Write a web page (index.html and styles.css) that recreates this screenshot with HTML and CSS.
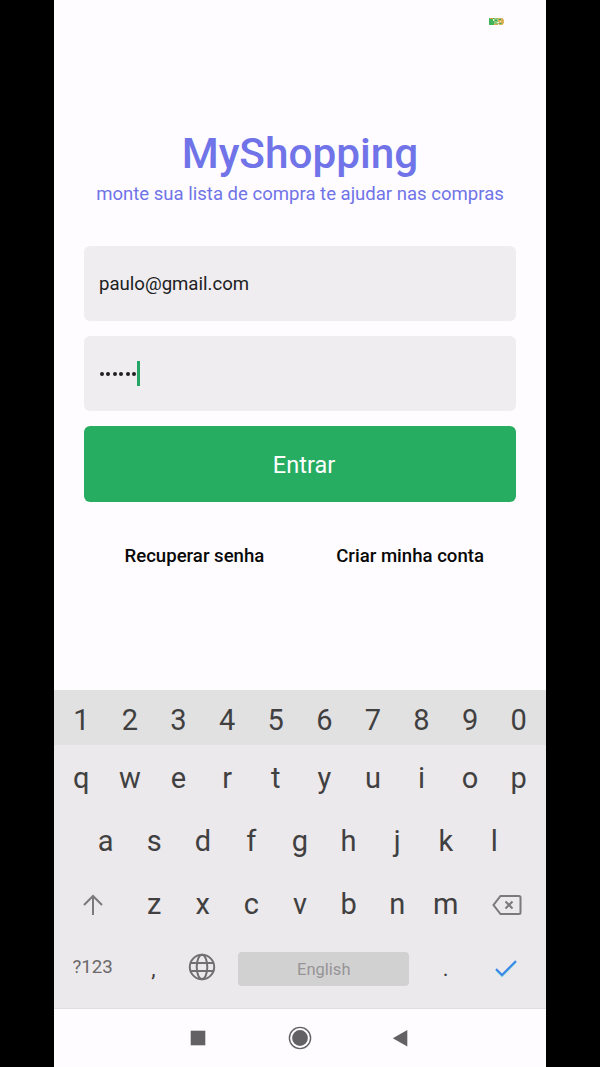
FILE: index.html
```html
<!DOCTYPE html>
<html lang="pt-BR">
<head>
<meta charset="utf-8">
<title>MyShopping</title>
<link rel="stylesheet" href="styles.css">
</head>
<body>
<div class="phone">
  <header class="status">
    <svg class="battery" width="16" height="9" viewBox="0 0 16 9">
      <path fill="#42b45a" d="M0 1h5v7H0z"/>
      <path fill="#8ac878" d="M5 1h4v7H5z"/>
      <path fill="#d8b45c" d="M9 1h4.500l1.500 2v3l-1.500 2H9z"/>
      <path stroke="#e8a04a" d="M1 1.500h3M5 7.500h3M13 3v3"/>
      <path stroke="#e6f2dc" d="M4.500 2v2M8 5.500h2M11 4.500h1M9 7.500h1"/>
      <path stroke="#36a858" d="M6 3.500h2M10 2.500h2M10.500 6.500h2"/>
    </svg>
  </header>
  <main class="login">
    <h1 class="title">MyShopping</h1>
    <p class="subtitle">monte sua lista de compra te ajudar nas compras</p>
    <div class="field"><span class="email">paulo@gmail.com</span></div>
    <div class="field"><span class="dots"><i></i><i></i><i></i><i></i><i></i><i></i></span><span class="caret"></span></div>
    <button class="enter">Entrar</button>
    <nav class="links"><a>Recuperar senha</a><a>Criar minha conta</a></nav>
  </main>
  <section class="keyboard">
    <div class="row numbers"><b>1</b><b>2</b><b>3</b><b>4</b><b>5</b><b>6</b><b>7</b><b>8</b><b>9</b><b>0</b></div>
    <div class="row"><b>q</b><b>w</b><b>e</b><b>r</b><b>t</b><b>y</b><b>u</b><b>i</b><b>o</b><b>p</b></div>
    <div class="row"><b>a</b><b>s</b><b>d</b><b>f</b><b>g</b><b>h</b><b>j</b><b>k</b><b>l</b></div>
    <div class="row">
      <b class="wide icon"><svg width="20" height="22" viewBox="0 0 20 22" fill="none" stroke="#7b797b" stroke-width="2"><path d="M10 21V2.500M1 11l9-9 9 9"/></svg></b>
      <b>z</b><b>x</b><b>c</b><b>v</b><b>b</b><b>n</b><b>m</b>
      <b class="wide icon"><svg width="30" height="22" viewBox="0 0 30 22" fill="none" stroke="#7b797b" stroke-width="2"><path d="M8.500 2H27q1.500 0 1.500 1.500v15q0 1.500-1.500 1.500H8.500L1.500 11z"/><path d="M12 7.500l7 7M19 7.500l-7 7" transform="translate(1.500)"/></svg></b>
    </div>
    <div class="row bottom">
      <b class="wide symbols">?123</b>
      <b class="punct">,</b>
      <b><svg width="28" height="28" viewBox="0 0 28 28" fill="none" stroke="#716f71" stroke-width="2"><circle cx="14" cy="14" r="12.200"/><ellipse cx="14" cy="14" rx="5.300" ry="12.200"/><path d="M2.500 10h23M2.500 18h23"/></svg></b>
      <span class="space">English</span>
      <b class="punct">.</b>
      <b class="wide check"><svg width="24" height="20" viewBox="0 0 24 20" fill="none"><path stroke="#8adfdf" stroke-width="2" d="M2 11l6 6L22 3"/><path stroke="#3c86e8" stroke-width="2" d="M2 10l6 6L22 2"/></svg></b>
    </div>
  </section>
  <footer class="navbar">
    <svg class="recents" width="16" height="16" viewBox="0 0 16 16"><path fill="#636163" d="M.7.700h14.600v14.600H.7z"/></svg>
    <svg width="24" height="24" viewBox="0 0 24 24"><circle cx="12" cy="12" r="10.600" fill="none" stroke="#636163" stroke-width="1.400"/><circle cx="12" cy="12" r="7.900" fill="#636163"/></svg>
    <svg width="16" height="18" viewBox="0 0 16 18"><path fill="#636163" d="M.8 9.300L15.300 1v16.600z"/></svg>
  </footer>
</div>
</body>
</html>
```
FILE: styles.css
```css
* { box-sizing: border-box; }
body {
  margin: 0;
  height: 1067px;
  background: #000;
  font-family: Roboto, sans-serif;
  display: flex;
  justify-content: center;
  overflow: hidden;
}
.phone {
  width: 492px;
  height: 1067px;
  background: #fefcfe;
  display: flex;
  flex-direction: column;
}
.status {
  height: 128px;
  padding: 17px 41px 0 0;
  display: flex;
  justify-content: flex-end;
}
.login {
  height: 562px;
  padding: 0 30px;
  display: flex;
  flex-direction: column;
}
.title, .subtitle {
  margin: 0;
  text-align: center;
  white-space: nowrap;
  color: #7074e8;
}
.title { font-size: 42.300px; line-height: 52px; font-weight: 500; }
.subtitle { font-size: 18.560px; line-height: 28px; margin-bottom: 38px; }
.field {
  height: 75px;
  margin-bottom: 15px;
  padding: 0 15px;
  border-radius: 6px;
  background: #efedf0;
  color: #202022;
  display: flex;
  align-items: center;
}
.email { font-size: 18.600px; padding-top: 1px; }
.dots { display: flex; gap: 2.400px; padding: 0 1px; }
.dots i { width: 4px; height: 4px; border-radius: 2px; background: #202022; }
.caret { width: 3px; height: 25px; background: #24a565; }
.enter {
  height: 75.500px;
  padding: 2px 0 0 8px;
  border: 0;
  border-radius: 6px;
  background: #27ad61;
  color: #fff;
  font: 23.500px Roboto, sans-serif;
}
.links {
  display: flex;
  justify-content: space-between;
  margin-top: 42.500px;
  padding: 0 32px 0 40.500px;
  font-size: 18.600px;
  line-height: 24px;
  font-weight: 500;
  color: #080808;
}
.keyboard {
  height: 319px;
  background: #ebe9eb;
  border-bottom: 1px solid #dfdddf;
  color: #414041;
}
.row {
  height: 63.300px;
  padding: 2px 2.500px 0 2.500px;
  display: flex;
  justify-content: center;
  align-items: center;
}
.numbers { height: 55px; padding-top: 4px; background: #e1e1e1; }
.bottom { padding-top: 0; padding-right: 3px; padding-left: 2px; }
.row b {
  width: 48.600px;
  display: flex;
  justify-content: center;
  font-size: 29px;
  font-weight: 400;
}
.row .wide { width: 73px; }
.row .icon { padding-top: 1px; }
.row .symbols { font-size: 18.700px; color: #6a686a; padding-top: 1px; }
.row .punct { font-size: 22px; padding-top: 4px; }
.check { padding-top: 4px; }
.space {
  width: 171px;
  height: 34px;
  margin: 4px 12px 0;
  padding-top: 2px;
  border-radius: 4px;
  background: #d2d1d1;
  color: #969496;
  font-size: 16.500px;
  display: flex;
  justify-content: center;
  align-items: center;
}
.navbar {
  height: 58px;
  display: flex;
  justify-content: center;
  align-items: center;
  gap: 80px;
}
.recents { margin-right: 2px; margin-left: -2px; }
```
